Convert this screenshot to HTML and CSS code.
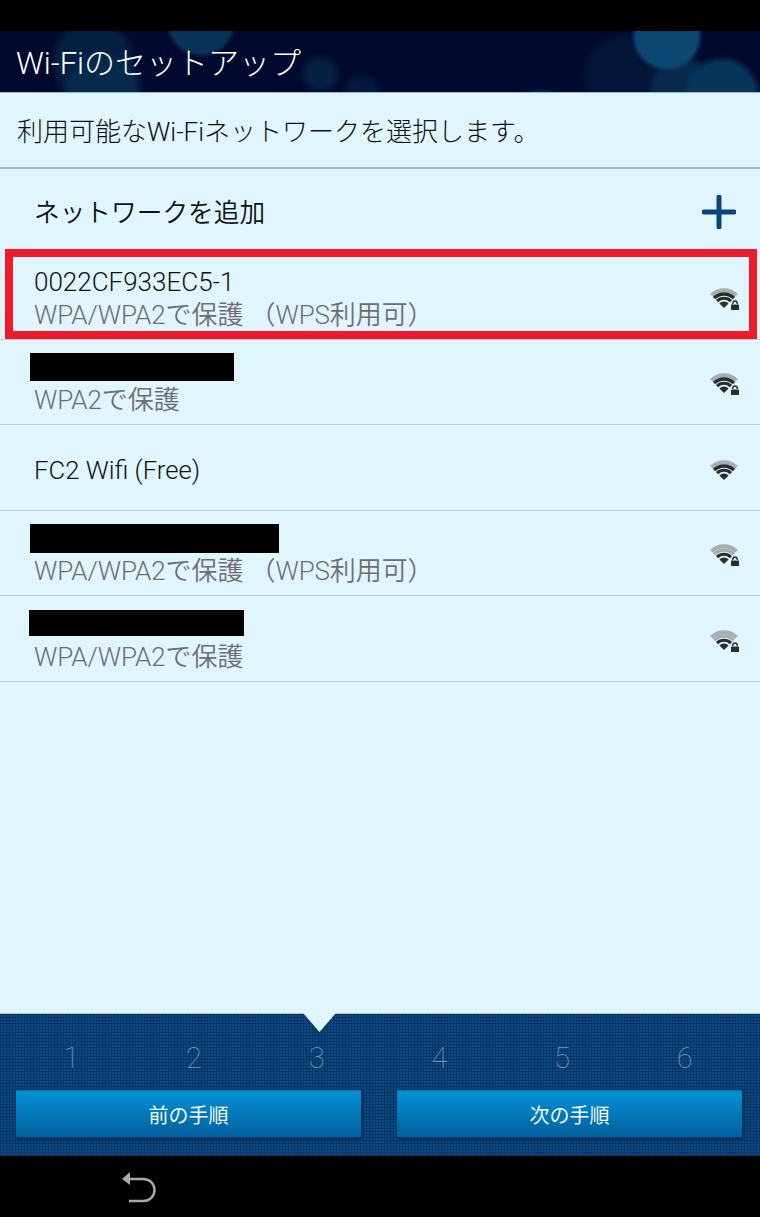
FILE: index.html
```html
<!DOCTYPE html>
<html lang="ja">
<head>
<meta charset="utf-8">
<title>Wi-Fiのセットアップ</title>
<link rel="stylesheet" href="styles.css">
</head>
<body>
<svg class="defs" width="0" height="0" aria-hidden="true">
  <defs>
    <symbol id="wifi-strong" viewBox="0 0 30 24">
      <path class="band band-1 light" d="M1.450 8.450a17.750 17.750 0 0 1 25.100 0"/>
      <path class="band band-2 dark" d="M4.100 11.100a14 14 0 0 1 19.800 0"/>
      <path class="band band-3 dark" d="M7.100 14.100a9.750 9.750 0 0 1 13.800 0"/>
      <path class="dark-fill" d="M14 21L9.400 16.400a6.500 6.500 0 0 1 9.200 0z"/>
    </symbol>
    <symbol id="wifi-weak" viewBox="0 0 30 24">
      <path class="band band-1 light" d="M1.450 8.450a17.750 17.750 0 0 1 25.100 0"/>
      <path class="band band-2 light" d="M4.100 11.100a14 14 0 0 1 19.800 0"/>
      <path class="band band-3 dark" d="M7.100 14.100a9.750 9.750 0 0 1 13.800 0"/>
      <path class="dark-fill" d="M14 21L9.400 16.400a6.500 6.500 0 0 1 9.200 0z"/>
    </symbol>
    <symbol id="lock" viewBox="0 0 30 24">
      <path class="shackle" d="M22.800 18v-1.800a2.200 2.200 0 0 1 4.400 0V18"/>
      <rect class="lock-body" x="21" y="17.500" width="8" height="5.500" rx=".6"/>
    </symbol>
  </defs>
</svg>
<div class="screen">
  <div class="status-bar"></div>
  <header class="title-bar"><h1>Wi-Fiのセットアップ</h1></header>
  <main class="content">
    <p class="intro">利用可能なWi-Fiネットワークを選択します。</p>
    <ul class="networks">
      <li class="row row-add">
        <span class="name">ネットワークを追加</span>
        <svg class="plus" viewBox="0 0 34 34" aria-hidden="true"><path d="M17 2v30M2 17h30"/></svg>
      </li>
      <li class="row row-selected">
        <div class="info">
          <span class="name">0022CF933EC5-1</span>
          <span class="security">WPA/WPA2で保護 （WPS利用可）</span>
        </div>
        <svg class="signal locked"><use href="#wifi-strong"/><use href="#lock"/></svg>
      </li>
      <li class="row">
        <div class="info">
          <span class="redacted redacted-a"></span>
          <span class="security">WPA2で保護</span>
        </div>
        <svg class="signal locked"><use href="#wifi-strong"/><use href="#lock"/></svg>
      </li>
      <li class="row">
        <span class="name">FC2 Wifi (Free)</span>
        <svg class="signal"><use href="#wifi-strong"/></svg>
      </li>
      <li class="row">
        <div class="info">
          <span class="redacted redacted-b"></span>
          <span class="security">WPA/WPA2で保護 （WPS利用可）</span>
        </div>
        <svg class="signal locked"><use href="#wifi-weak"/><use href="#lock"/></svg>
      </li>
      <li class="row">
        <div class="info">
          <span class="redacted redacted-c"></span>
          <span class="security">WPA/WPA2で保護</span>
        </div>
        <svg class="signal locked"><use href="#wifi-weak"/><use href="#lock"/></svg>
      </li>
    </ul>
    <div class="highlight"></div>
  </main>
  <footer class="wizard">
    <div class="notch"></div>
    <ol class="steps">
      <li>1</li><li>2</li><li>3</li><li>4</li><li>5</li><li>6</li>
    </ol>
    <div class="actions">
      <button class="btn" type="button">前の手順</button>
      <button class="btn" type="button">次の手順</button>
    </div>
  </footer>
  <nav class="nav-bar">
    <svg class="back" viewBox="0 0 34 32" aria-hidden="true">
      <path class="back-line" d="M6 7H21.500a11 11 0 0 1 0 22H7"/>
      <path class="back-head" d="M0 7L8 0V13z"/>
    </svg>
  </nav>
</div>
</body>
</html>
```
FILE: styles.css
```css
* { box-sizing: border-box; }
html, body { margin: 0; padding: 0; background: #000; }
body { font-family: Roboto, "Noto Sans CJK JP", sans-serif; }
.defs { position: absolute; }

.screen { width: 760px; height: 1217px; display: flex; flex-direction: column; overflow: hidden; }
.status-bar { height: 31px; background: #000; flex: none; }

.title-bar {
  height: 62px;
  flex: none;
  display: flex;
  align-items: center;
  padding: 3px 16px 0;
  border-bottom: 1px solid #9fb6c6;
  background:
    radial-gradient(circle 36px at 667px 5px, #0c4672 0 85%, transparent 100%) no-repeat,
    radial-gradient(circle 41px at 541px 98px, #08355f 0 85%, transparent 100%) no-repeat,
    radial-gradient(circle 40px at 722px 64px, #09345a 0 80%, transparent 100%) no-repeat,
    radial-gradient(circle 36px at 683px 60px, #072a4c 0 80%, transparent 100%) no-repeat,
    radial-gradient(circle 36px at 201px -9px, #083358 0 85%, transparent 100%) no-repeat,
    radial-gradient(circle 42px at 103px 60px, #062a4c 0 75%, transparent 100%) no-repeat,
    radial-gradient(circle 45px at 93px 30px, #051f42 0 75%, transparent 100%) no-repeat,
    radial-gradient(circle 22px at 320px 43px, #061f42 0 55%, transparent 100%) no-repeat,
    radial-gradient(circle 22px at 362px 62px, #041a3c 0 55%, transparent 100%) no-repeat,
    radial-gradient(circle 45px at 625px 45px, #031538 0 80%, transparent 100%) no-repeat,
    #010a2e;
}
.title-bar h1 { margin: 0; font-size: 31px; font-weight: 300; line-height: 1; color: #fff; white-space: nowrap; }

.content { position: relative; flex: 1; min-height: 0; background: #e0f5fe; }
.intro {
  margin: 0;
  height: 76px;
  padding: 0 17px 2px;
  display: flex;
  align-items: center;
  font-size: 26px;
  font-weight: 300;
  color: #111;
  border-bottom: 2px solid #a7b5bf;
}

.networks { list-style: none; margin: 0; padding: 0; }
.row {
  height: 85.500px;
  padding: 0 20px 0 34px;
  display: flex;
  align-items: center;
  justify-content: space-between;
  border-bottom: 1px solid #bccbd3;
}
.row-add { border-bottom: 0; height: 85px; }
.row > .name { padding-top: 6px; }
.row-add > .name { padding-top: 2px; }
.info { display: flex; flex-direction: column; align-items: flex-start; padding-top: 6px; }
.name { font-size: 26px; line-height: 32px; color: #111; font-weight: 350; white-space: nowrap; }
.row > .name, .row-add > .name { font-size: 25.700px; }
.security { font-size: 26px; line-height: 34px; letter-spacing: -.1px; color: #6d6e72; font-weight: 350; white-space: nowrap; }
.redacted { display: block; background: #000; margin: 1px 0 0 -4px; }
.redacted-a { width: 204px; height: 28px; margin-bottom: 2px; }
.redacted-b { width: 249px; height: 29px; margin-bottom: 1px; }
.redacted-c { width: 215px; height: 26px; margin-bottom: 4px; margin-left: -5px; }

.plus { width: 34px; height: 34px; margin-right: 4px; }
.plus path { fill: none; stroke: #0b4679; stroke-width: 5px; stroke-linecap: round; }

.signal { width: 30px; height: 24px; align-self: flex-end; margin-bottom: 27px; }
.signal.locked { margin-bottom: 28px; }
.band { fill: none; }
.band-1 { stroke-width: 4px; }
.band-2 { stroke-width: 3.400px; }
.band-3 { stroke-width: 3.200px; }
.light { stroke: #a9adb0; }
.dark { stroke: #2b2c2e; }
.dark-fill { fill: #2b2c2e; }
.lock-body { fill: #2b2c2e; stroke: #e0f5fe; stroke-width: 1px; paint-order: stroke; }
.shackle { fill: none; stroke: #2b2c2e; stroke-width: 1.400px; }

.highlight {
  position: absolute;
  left: 5px;
  top: 156px;
  width: 752px;
  height: 90px;
  border: 8px solid #ef1a2b;
  pointer-events: none;
}

.wizard {
  position: relative;
  height: 143px;
  flex: none;
  border-top: 1px solid #b6cad6;
  padding: 27px 18px 0 16px;
  background-color: #0a4b85;
  background-image:
    repeating-linear-gradient(90deg, rgba(0,28,64,.42) 0 1px, transparent 1px 3px),
    repeating-linear-gradient(0deg, rgba(0,28,64,.42) 0 1px, transparent 1px 3px);
}
.notch {
  position: absolute;
  left: 303px;
  top: -1px;
  width: 33px;
  height: 19px;
  background: #e0f5fe;
  clip-path: polygon(0 0, 100% 0, 50% 100%);
}
.steps {
  list-style: none;
  margin: 0 -4px 0 -6px;
  padding: 0;
  height: 49px;
  display: grid;
  grid-template-columns: repeat(6, 1fr);
  justify-items: center;
  font-size: 29px;
  font-weight: 100;
  line-height: 34px;
  color: #7d96ae;
}
.actions { display: flex; justify-content: space-between; }
.btn {
  width: 345px;
  height: 48px;
  padding: 0;
  border: 0;
  border-top: 1px solid #0b74ab;
  border-bottom: 1px solid #023f70;
  background: linear-gradient(#0391d6, #02609d);
  box-shadow: 1px 1px 2px rgba(0,16,40,.6);
  color: #f2f8fc;
  font-family: inherit;
  font-size: 20px;
  font-weight: 400;
}

.nav-bar { height: 61px; flex: none; background: #000; padding: 16px 0 0 122px; }
.back { display: block; width: 34px; height: 32px; }
.back-line { fill: none; stroke: #a9a9a9; stroke-width: 2.500px; }
.back-head { fill: #a9a9a9; }
```
